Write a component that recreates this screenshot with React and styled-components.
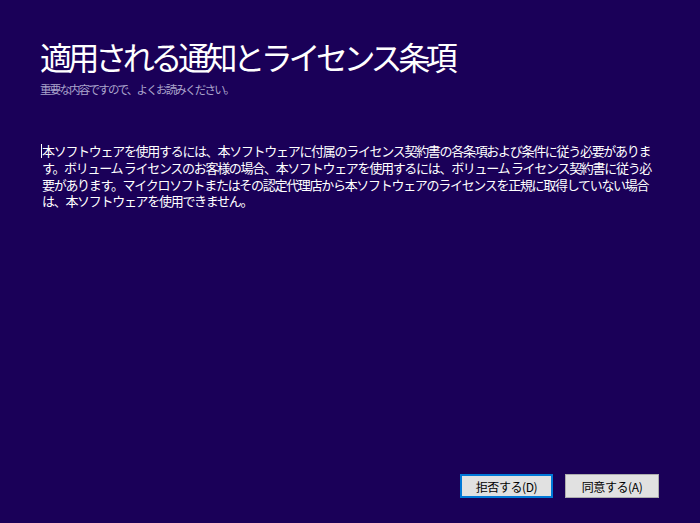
import React from 'react';
import styled, { createGlobalStyle } from 'styled-components';

const GlobalStyle = createGlobalStyle`
  html, body {
    margin: 0;
    padding: 0;
    background: #1a0058;
  }
  body {
    font-family: "Noto Sans CJK JP", "Noto Sans", sans-serif;
  }
`;

const Page = styled.div`
  width: 700px;
  height: 523px;
  box-sizing: border-box;
  padding: 34px 41px 25px 40px;
  display: flex;
  flex-direction: column;
  background: #1a0058;
  color: #ffffff;
`;

const Title = styled.h1`
  margin: 0;
  font-size: 32px;
  font-weight: 400;
  line-height: 44px;
  letter-spacing: -4.4px;
  color: #ffffff;
`;

const Subtitle = styled.div`
  margin-top: 3px;
  font-size: 11.5px;
  line-height: 16px;
  letter-spacing: -1.8px;
  color: #aaa4cc;
`;

const Body = styled.div`
  position: relative;
  margin-top: 46px;
  padding-left: 2px;
  font-size: 13px;
  line-height: 16.8px;
  letter-spacing: -1.3px;
  white-space: nowrap;
  flex: 1;
`;

const Caret = styled.span`
  position: absolute;
  left: 1px;
  top: 1px;
  width: 1px;
  height: 14px;
  background: #ffffff;
`;

const Footer = styled.div`
  display: flex;
  justify-content: flex-end;
  gap: 12px;
`;

const Button = styled.button`
  width: ${(p) => p.$w}px;
  height: 24px;
  box-sizing: border-box;
  margin: 0;
  padding: 0;
  font-family: "Noto Sans CJK JP", sans-serif;
  font-size: 12px;
  letter-spacing: -0.4px;
  color: #000000;
  background: #e1e1e1;
  border: ${(p) => (p.$focused ? '2px solid #0078d7' : '1px solid #adadad')};
  border-radius: 0;
`;

const lines = [
  '本ソフトウェアを使用するには、本ソフトウェアに付属のライセンス契約書の各条項および条件に従う必要がありま',
  'す。ボリューム ライセンスのお客様の場合、本ソフトウェアを使用するには、ボリューム ライセンス契約書に従う必',
  '要があります。マイクロソフトまたはその認定代理店から本ソフトウェアのライセンスを正規に取得していない場合',
  'は、本ソフトウェアを使用できません。',
];

export default function App() {
  return (
    <>
      <GlobalStyle />
      <Page>
        <Title>適用される通知とライセンス条項</Title>
        <Subtitle>重要な内容ですので、よくお読みください。</Subtitle>
        <Body>
          <Caret />
          {lines.map((l, i) => (
            <div key={i}>{l}</div>
          ))}
        </Body>
        <Footer>
          <Button $w={93} $focused>拒否する(D)</Button>
          <Button $w={94}>同意する(A)</Button>
        </Footer>
      </Page>
    </>
  );
}
